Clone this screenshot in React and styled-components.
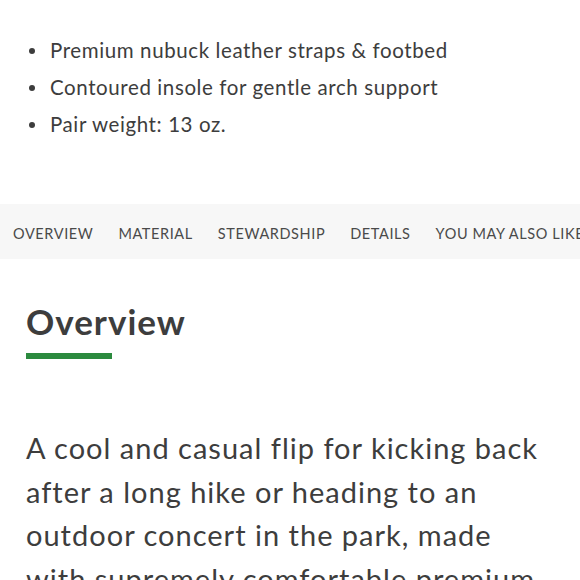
import React from "react";
import styled, { createGlobalStyle } from "styled-components";

const GlobalStyle = createGlobalStyle`
  body {
    margin: 0;
    background: #ffffff;
    font-family: Lato, "Open Sans", sans-serif;
    color: #3d3d3d;
    overflow: hidden;
  }
`;

const Page = styled.div`
  width: 580px;
  height: 580px;
  overflow: hidden;
`;

const Features = styled.ul`
  margin: 0;
  padding: 32px 0 0 29px;
  list-style: none;
`;

const Feature = styled.li`
  display: flex;
  align-items: center;
  gap: 15px;
  font-size: 20.5px;
  line-height: 37px;
  letter-spacing: 0.6px;
  color: #3d3d3d;
  &::before {
    content: "";
    width: 6px;
    height: 6px;
    border-radius: 50%;
    background: #3d3d3d;
    flex-shrink: 0;
  }
`;

const TabBar = styled.nav`
  margin-top: 61px;
  height: 55px;
  background: #f7f7f7;
  display: flex;
  align-items: center;
  gap: 25px;
  padding-left: 13px;
  white-space: nowrap;
  overflow: hidden;
`;

const Tab = styled.a`
  font-size: 14.5px;
  letter-spacing: 0.6px;
  color: #4a4a4a;
  text-transform: uppercase;
  padding-top: 4px;
  flex-shrink: 0;
`;

const Section = styled.section`
  padding: 0 26px;
`;

const Heading = styled.h2`
  margin: 40px 0 0;
  font-size: 35px;
  line-height: 44px;
  font-weight: 700;
  color: #3d3d3d;
  letter-spacing: 1px;
`;

const Underline = styled.div`
  width: 86px;
  height: 6px;
  background: #2b8a3e;
  margin-top: 10px;
`;

const Lead = styled.p`
  margin: 67px 0 0;
  font-size: 29px;
  line-height: 43.5px;
  letter-spacing: 1px;
  color: #3d3d3d;
`;

const tabs = ["Overview", "Material", "Stewardship", "Details", "You may also like"];

export default function App() {
  return (
    <Page>
      <GlobalStyle />
      <Features>
        <Feature>Premium nubuck leather straps &amp; footbed</Feature>
        <Feature>Contoured insole for gentle arch support</Feature>
        <Feature>Pair weight: 13 oz.</Feature>
      </Features>
      <TabBar>
        {tabs.map(t => (
          <Tab key={t}>{t}</Tab>
        ))}
      </TabBar>
      <Section>
        <Heading>Overview</Heading>
        <Underline />
        <Lead>
          A cool and casual flip for kicking back after a long hike or heading
          to an outdoor concert in the park, made with supremely comfortable
          premium nubuck leather.
        </Lead>
      </Section>
    </Page>
  );
}
